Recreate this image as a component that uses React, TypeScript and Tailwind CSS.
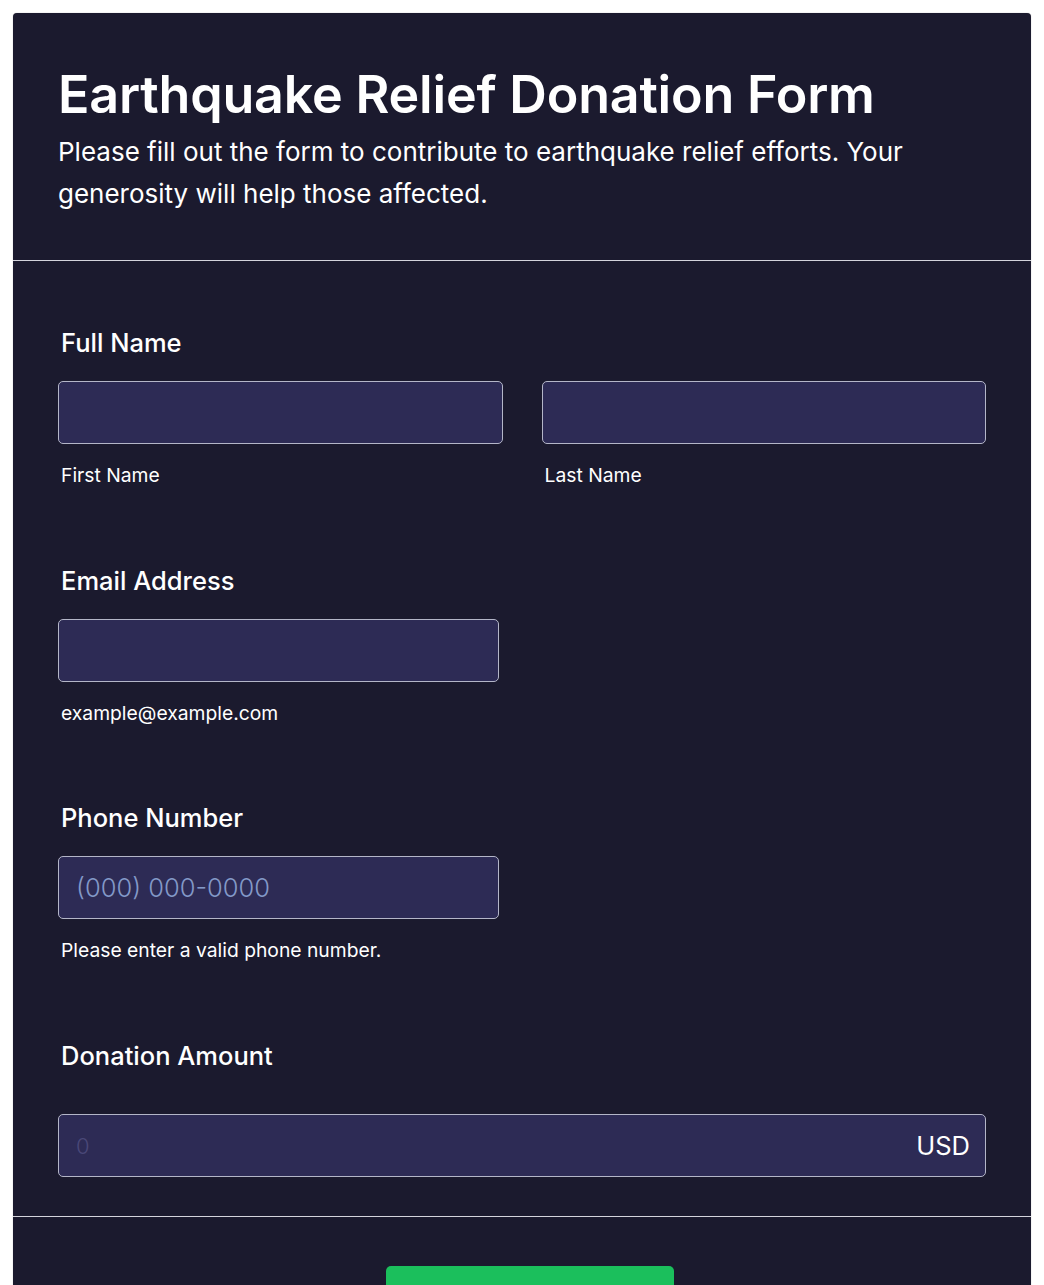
export default function App() {
  return (
    <div className="min-h-screen bg-white px-[13px] pt-[13px] font-['Inter',sans-serif] text-white">
      <div className="rounded-t-[4px] bg-[#1b1a2e] shadow-[0_0_1px_rgba(0,0,0,0.4)]">
        <header className="border-b border-[#d4d4dc] px-[45px] pt-[52px] pb-[45px]">
          <h1 className="text-[52px] font-semibold leading-[60px] tracking-[-0.2px]">
            Earthquake Relief Donation Form
          </h1>
          <p className="mt-[6px] max-w-[900px] text-[26px] leading-[42px]">
            Please fill out the form to contribute to earthquake relief efforts. Your generosity will help those affected.
          </p>
        </header>

        <form className="border-b border-[#d4d4dc] px-[45px] pt-[66px] pb-[39px]">
          <div>
            <label className="block pl-[3px] text-[25.5px] font-medium leading-[32px]">Full Name</label>
            <div className="mt-[22px] grid grid-cols-2 gap-[39px]">
              <div>
                <input className="h-[63px] w-full rounded-[5px] border-[1.5px] border-[#b4b6c8] bg-[#2d2b55] outline-none" />
                <div className="mt-[19px] pl-[3px] text-[19.3px] leading-[24px]">First Name</div>
              </div>
              <div>
                <input className="h-[63px] w-full rounded-[5px] border-[1.5px] border-[#b4b6c8] bg-[#2d2b55] outline-none" />
                <div className="mt-[19px] pl-[3px] text-[19.3px] leading-[24px]">Last Name</div>
              </div>
            </div>
          </div>

          <div className="mt-[78px]">
            <label className="block pl-[3px] text-[25.5px] font-medium leading-[32px]">Email Address</label>
            <input className="mt-[22px] h-[63px] w-[441px] rounded-[5px] border-[1.5px] border-[#b4b6c8] bg-[#2d2b55] outline-none" />
            <div className="mt-[19px] pl-[3px] text-[19.3px] leading-[24px]">example@example.com</div>
          </div>

          <div className="mt-[77px]">
            <label className="block pl-[3px] text-[25.5px] font-medium leading-[32px]">Phone Number</label>
            <input
              placeholder="(000) 000-0000"
              className="mt-[22px] h-[63px] w-[441px] rounded-[5px] border-[1.5px] border-[#b4b6c8] bg-[#2d2b55] px-[17px] text-[25.5px] font-light outline-none placeholder:text-[#8399c8]"
            />
            <div className="mt-[19px] pl-[3px] text-[19.3px] leading-[24px]">Please enter a valid phone number.</div>
          </div>

          <div className="mt-[78px]">
            <label className="block pl-[3px] text-[25.5px] font-medium leading-[32px]">Donation Amount</label>
            <div className="mt-[42px] flex h-[63px] w-full items-center rounded-[5px] border-[1.5px] border-[#b4b6c8] bg-[#2d2b55] pr-[15px]">
              <input
                placeholder="0"
                className="h-full flex-1 bg-transparent pl-[17px] text-[22px] font-light outline-none placeholder:text-[#4a4878]"
              />
              <span className="text-[25.5px] leading-none">USD</span>
            </div>
          </div>
        </form>

        <div className="flex justify-center pt-[49px] pl-[16px]">
          <button className="h-[60px] w-[288px] rounded-t-[5px] bg-[#1bbf5c]" />
        </div>
      </div>
    </div>
  );
}
